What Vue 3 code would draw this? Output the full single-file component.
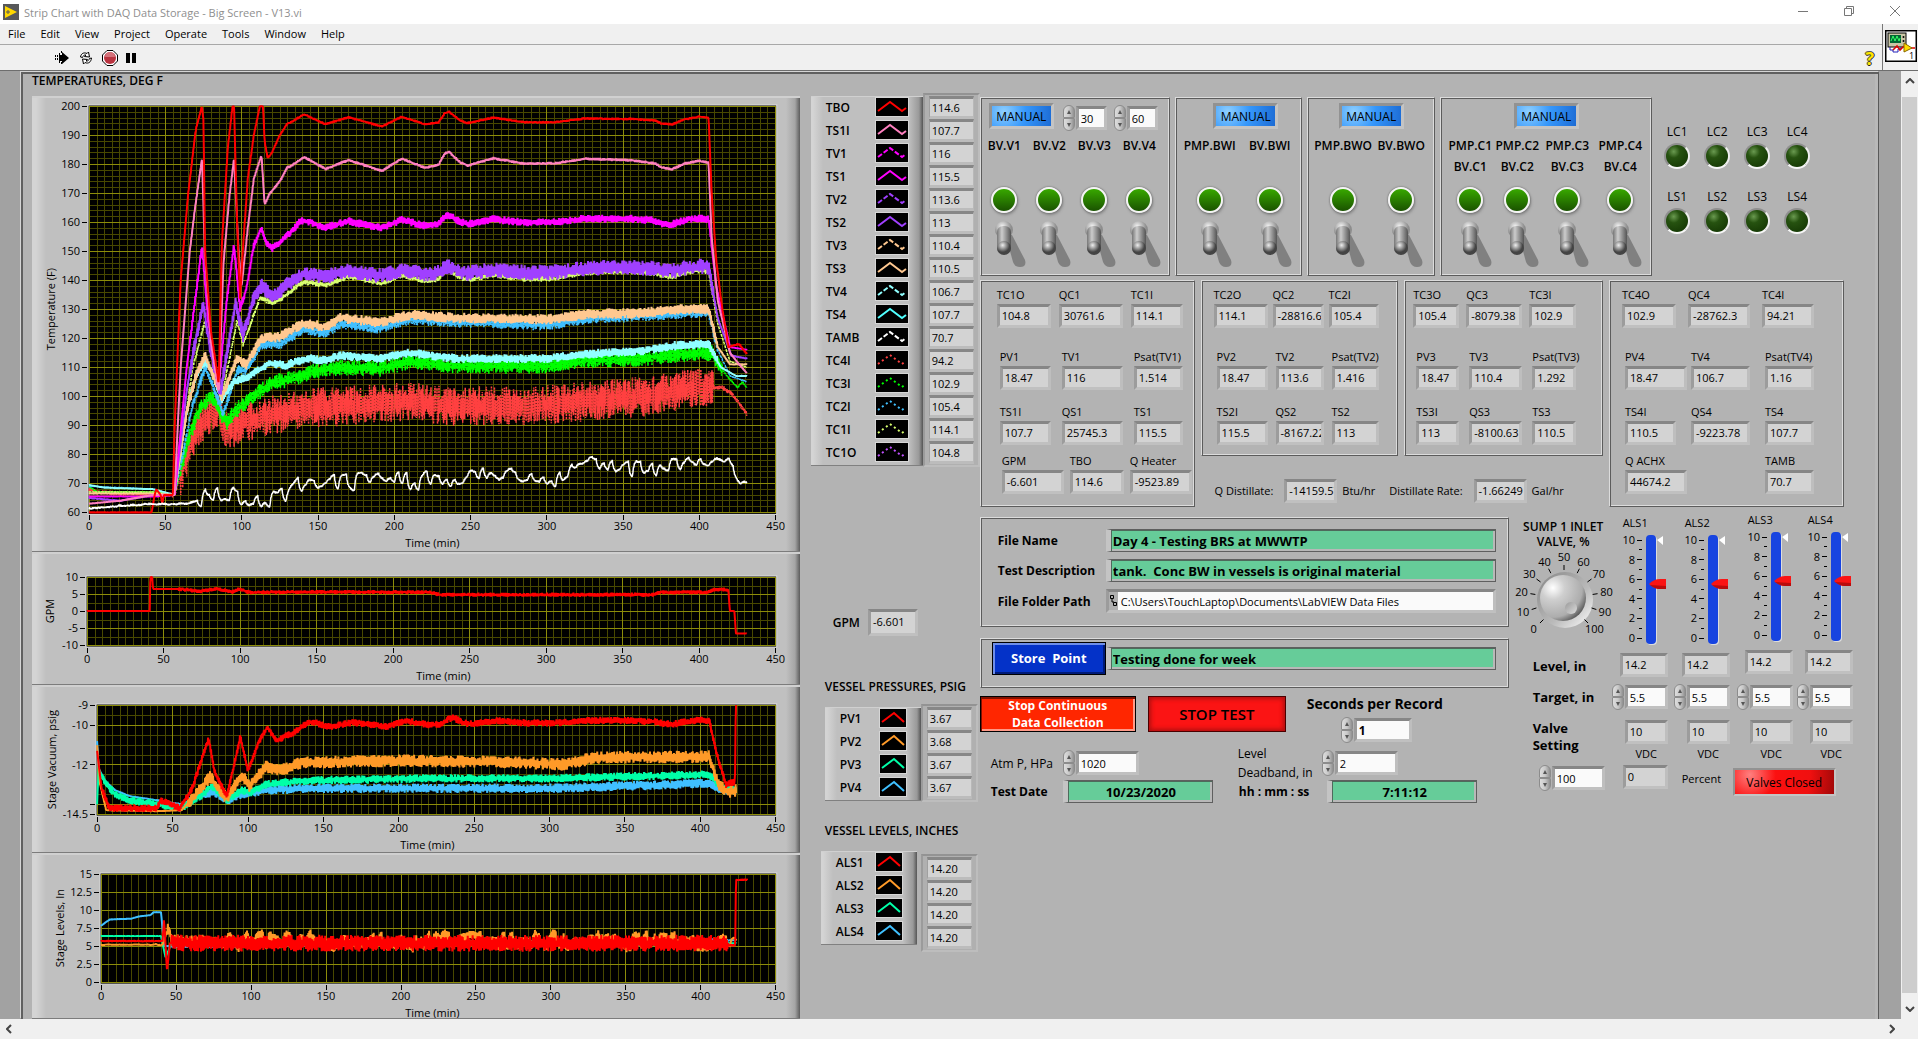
<template>
  <div class="window">
    <header class="titlebar">
      <svg class="app-icon" viewBox="0 0 16 16">
        <rect width="16" height="16" fill="#57585a" />
        <path d="M2 2L14 8L2 14Z" fill="#ffd800" />
        <path d="M3 8h4M5 6v4" stroke="#57585a" stroke-width="1" />
      </svg>
      <span class="caption">Strip Chart with DAQ Data Storage - Big Screen - V13.vi</span>
      <div class="window-buttons">
        <button aria-label="Minimize"><svg viewBox="0 0 12 12"><path d="M1 6.5h10" /></svg></button>
        <button aria-label="Restore"><svg viewBox="0 0 12 12"><path d="M1.5 3.5h7v7h-7zM3.5 3.5v-2h7v7h-2" /></svg></button>
        <button aria-label="Close"><svg viewBox="0 0 12 12"><path d="M1 1L11 11M11 1L1 11" /></svg></button>
      </div>
    </header>

    <div class="bars">
      <nav class="menubar">
        <a v-for="m in menus" :key="m" href="#">{{ m }}</a>
      </nav>
      <div class="toolbar">
        <button aria-label="Run">
          <svg width="16" height="14" viewBox="0 0 16 14">
            <path d="M8 1L15 7L8 13V10H5V4H8Z" fill="#000" />
            <path d="M1.5 4v6M3.5 4v6M5.5 2v2M7.5 0v3M5.5 10v2M7.5 11v3" stroke="#000" stroke-dasharray="2 1" />
          </svg>
        </button>
        <button aria-label="Run continuously">
          <svg width="16" height="14" viewBox="0 0 16 14" fill="#fff" stroke="#000">
            <path d="M2.5 6C3 2.500 6 1 9 2.500L10.500 1L11.500 6L6.500 5.500L8 4C6 3.500 5 5 4.500 6.500Z" />
            <path d="M13.500 7C13 11.500 10 13 7 11.500L5.500 13L4.500 8L9.500 8.500L8 10C10 10.500 11 9 11.500 7.500Z" />
          </svg>
        </button>
        <button aria-label="Abort">
          <svg width="16" height="16" viewBox="0 0 16 16">
            <path d="M5 .5h6L15.500 5v6L11 15.500H5L.5 11V5Z" fill="#fff" stroke="#000" />
            <circle cx="8" cy="8" r="6" fill="#b93440" />
            <path d="M3 7a5 5 0 0 1 10 0Z" fill="#d4717a" />
          </svg>
        </button>
        <button aria-label="Pause">
          <svg width="10" height="12" viewBox="0 0 10 12"><path d="M0 1h4v10h-4zM6 1h4v10h-4z" fill="#000" /></svg>
        </button>
        <button class="help" aria-label="Context help">?</button>
      </div>
      <div class="vi-icon">
        <svg width="32" height="32" viewBox="0 0 32 32">
          <rect x=".75" y=".75" width="30.500" height="30.500" fill="#fff" stroke="#000" stroke-width="1.500" />
          <rect x="3" y="3" width="18" height="14" fill="#c9c6a5" stroke="#000" />
          <rect x="5" y="5" width="11" height="8" fill="#063" />
          <path d="M6 11L8 6L10 11L12 6L14 11L15 8" fill="none" stroke="#3f6" />
          <circle cx="18.500" cy="7" r="1" /><circle cx="18.500" cy="11" r="1" />
          <path d="M5 17v3h3v2h5v-3h3v-2" fill="none" stroke="#22b" />
          <path d="M8 20L12 16L15 20L19 16M26 18h4" fill="none" stroke="#d00" stroke-width="1.500" />
          <path d="M19 13L27 18L19 22Z" fill="#fd0" stroke="#860" />
          <text x="24" y="29" font-size="9">1</text>
        </svg>
      </div>
    </div>

    <main class="workspace">
      <div class="front-panel">
        <h1>TEMPERATURES, DEG F</h1>

        <section class="charts">
          <svg v-for="c in charts" :key="c.title" class="chart" :viewBox="`0 0 767 ${c.height}`">
            <rect :x="c.left - 1" :y="c.top - 1" :width="745 - c.left" :height="c.bottom - c.top + 3" fill="#000" stroke="#ddd" />
            <path :d="c.minor" class="minor" />
            <path :d="c.major" class="major" />
            <path :d="c.ticks" class="tick" />
            <polyline
              v-for="(s, i) in c.lines" :key="i" :points="s.points" fill="none"
              :stroke="s.color" :stroke-width="s.width" :stroke-dasharray="s.dash" stroke-linejoin="bevel"
            />
            <text v-for="y in c.yLabels" :key="y.text" :x="c.left - 9" :y="y.pos + 4" text-anchor="end">{{ y.text }}</text>
            <text v-for="x in c.xLabels" :key="x.text" :x="x.pos" :y="c.bottom + 18" text-anchor="middle">{{ x.text }}</text>
            <text :x="c.caption" :y="c.bottom + 35" text-anchor="middle">Time (min)</text>
            <text :transform="`translate(${c.titleX} ${(c.top + c.bottom) / 2}) rotate(-90)`" text-anchor="middle">{{ c.title }}</text>
          </svg>
        </section>

        <section class="legends">
          <div class="legend-pair">
            <ul class="legend">
              <li v-for="t in temps" :key="t.name">
                <b>{{ t.name }}</b>
                <svg width="32" height="18" viewBox="0 0 32 18">
                  <rect width="32" height="18" />
                  <path d="M2 13L14 4L26 13L30 10" fill="none" :stroke="t.color" stroke-width="2" :stroke-dasharray="t.dash" />
                </svg>
              </li>
            </ul>
            <div class="readings"><output v-for="t in temps" :key="t.name">{{ t.value }}</output></div>
          </div>

          <label class="gpm"><b>GPM</b><output class="box">-6.601</output></label>

          <template v-for="g in vessels" :key="g.title">
            <h2>{{ g.title }}</h2>
            <div class="legend-pair small" :class="g.kind">
              <ul class="legend">
                <li v-for="(n, i) in g.names" :key="n">
                  <b>{{ n }}</b>
                  <svg width="26" height="18" viewBox="0 0 26 18">
                    <rect width="26" height="18" />
                    <path d="M2 13L14 4L24 13" fill="none" :stroke="stageColors[i]" stroke-width="2" />
                  </svg>
                </li>
              </ul>
              <div class="readings"><output v-for="(v, i) in g.values" :key="i">{{ v }}</output></div>
            </div>
          </template>
        </section>

        <section class="controls">
          <div class="valve-row">
            <fieldset v-for="(v, i) in valves" :key="i" class="panel valves" :class="'valves-' + (i + 1)">
              <div class="mode">
                <button class="manual">MANUAL</button>
                <label v-for="n in v.timers" :key="n" class="numeric">
                  <span class="spin"><button aria-label="Increase"></button><button aria-label="Decrease"></button></span>
                  <input :value="n" :aria-label="'Timer ' + n" />
                </label>
              </div>
              <div class="valve-grid">
                <label v-for="n in v.names" :key="n[0]" class="valve">
                  <b>{{ n[0] }}<br />{{ n[1] }}</b>
                  <span class="lamp"></span>
                  <input type="checkbox" />
                  <svg width="34" height="50" viewBox="0 0 34 50"><use href="#toggle" /></svg>
                </label>
              </div>
            </fieldset>
            <div class="leds">
              <div v-for="n in leds" :key="n"><span>{{ n }}</span><i></i></div>
            </div>
          </div>

          <div class="bank-row">
            <div v-for="b in banks" :key="b.id" class="panel bank" :class="'bank-' + b.id">
              <div v-for="(r, i) in b.rows" :key="i" class="bank-line">
                <label v-for="f in r" :key="f[0]" :class="f[2]">{{ f[0] }}<output class="box">{{ f[1] }}</output></label>
              </div>
            </div>
            <div class="distillate">
              <label>Q Distillate: <output class="box">-14159.57</output> Btu/hr</label>
              <label>Distillate Rate: <output class="box">-1.66249</output> Gal/hr</label>
            </div>
          </div>

          <div class="lower">
            <div class="record">
              <div class="panel files">
                <label for="fname">File Name</label>
                <input id="fname" class="green" value="Day 4 - Testing BRS at MWWTP" />
                <label for="fdesc">Test Description</label>
                <input id="fdesc" class="green" value="tank.  Conc BW in vessels is original material" />
                <label for="fpath">File Folder Path</label>
                <div class="path">
                  <svg width="9" height="14" viewBox="0 0 9 14" fill="none" stroke="#000"><path d="M1.500 1.500h3v3h-3zM4.500 8.500h3v3h-3zM3 5v3h2" /></svg>
                  <input id="fpath" value="C:\Users\TouchLaptop\Documents\LabVIEW Data Files" />
                </div>
              </div>
              <div class="panel store">
                <button>Store&nbsp; Point</button>
                <input class="green" value="Testing done for week" aria-label="Point comment" />
              </div>
              <div class="actions">
                <button class="stop-data">Stop Continuous Data Collection</button>
                <button class="stop-test">STOP TEST</button>
                <div class="seconds">
                  <label for="seconds">Seconds per Record</label>
                  <div class="numeric">
                    <span class="spin"><button aria-label="Increase"></button><button aria-label="Decrease"></button></span>
                    <input id="seconds" value="1" />
                  </div>
                </div>
              </div>
              <div class="settings">
                <label for="atm">Atm P, HPa</label>
                <div class="numeric">
                  <span class="spin"><button aria-label="Increase"></button><button aria-label="Decrease"></button></span>
                  <input id="atm" value="1020" />
                </div>
                <label for="deadband">Level<br />Deadband, in</label>
                <div class="numeric">
                  <span class="spin"><button aria-label="Increase"></button><button aria-label="Decrease"></button></span>
                  <input id="deadband" value="2" />
                </div>
              </div>
              <div class="stamps">
                <label for="date">Test Date</label>
                <input id="date" class="green" value="10/23/2020" />
                <label for="time">hh : mm : ss</label>
                <input id="time" class="green" value="7:11:12" />
              </div>
            </div>

            <div class="levels">
              <div class="sump">
                <b>SUMP 1 INLET<br />VALVE, %</b>
                <div class="overlay">
                  <svg width="94" height="96" viewBox="0 0 94 96">
                    <circle cx="48" cy="51" r="28" fill="url(#rim)" />
                    <circle cx="46" cy="49" r="23" fill="url(#ball)" />
                    <circle cx="54" cy="59" r="6" fill="url(#dimple)" />
                    <path :d="knob.ticks" stroke="#000" />
                    <text v-for="k in knob.labels" :key="k.text" :x="k.x" :y="k.y" text-anchor="middle">{{ k.text }}</text>
                  </svg>
                  <input type="range" min="0" max="100" value="100" aria-label="Sump 1 inlet valve, %" />
                </div>
              </div>
              <div v-for="(a, i) in tanks" :key="a.name" class="tank" :class="{ raised: i > 1 }">
                <span>{{ a.name }}</span>
                <div class="overlay">
                  <svg width="48" height="112" viewBox="0 0 48 112">
                    <rect x="27" y="2" width="10" height="109" rx="4" fill="#ddd" />
                    <rect x="26" y="1" width="10" height="109" rx="4" fill="#1744e0" />
                    <path :d="scaleTicks" stroke="#000" shape-rendering="crispEdges" />
                    <text v-for="n in scaleLabels" :key="n.text" x="15" :y="n.y" text-anchor="end">{{ n.text }}</text>
                    <path d="M37 6L43 2V11Z" fill="#fff" />
                    <path d="M29 50Q34 45 40 45H46V55H40Q34 55 29 50Z" fill="#fa1414" />
                    <path d="M30 51Q35 55 40 55H46V52Z" fill="#b80c0c" />
                  </svg>
                  <input type="range" min="0" max="10" step="0.1" value="5.5" :aria-label="a.name + ' target'" />
                </div>
              </div>

              <b class="line">Level, in</b>
              <output v-for="(a, i) in tanks" :key="a.name" class="box level" :class="{ raised: i > 1 }" :aria-label="a.name">14.2</output>

              <b class="line">Target, in</b>
              <label v-for="a in tanks" :key="a.name" class="numeric target">
                <span class="spin"><button aria-label="Increase"></button><button aria-label="Decrease"></button></span>
                <input value="5.5" :aria-label="a.name + ' target, in'" />
              </label>

              <b class="line valve-setting">Valve<br />Setting</b>
              <label v-for="a in tanks" :key="a.name" class="vdc"><output class="box">10</output>VDC</label>

              <label class="numeric percent">
                <span class="spin"><button aria-label="Increase"></button><button aria-label="Decrease"></button></span>
                <input value="100" aria-label="Valve setting" />
              </label>
              <output id="pct" class="box zero">0</output>
              <label for="pct" class="percent-label">Percent</label>
              <button class="closed">Valves Closed</button>
            </div>
          </div>
        </section>
      </div>

      <div class="vscroll">
        <svg width="10" height="6" viewBox="0 0 10 6"><path d="M1 5L5 1L9 5" /></svg>
        <div class="thumb"></div>
        <svg width="10" height="6" viewBox="0 0 10 6"><path d="M1 1L5 5L9 1" /></svg>
      </div>
    </main>

    <div class="hscroll">
      <svg width="6" height="10" viewBox="0 0 6 10"><path d="M5 1L1 5L5 9" /></svg>
      <svg width="6" height="10" viewBox="0 0 6 10"><path d="M1 1L5 5L1 9" /></svg>
    </div>

    <svg class="defs" width="0" height="0">
      <defs>
        <linearGradient id="stem" x1="0" x2="1">
          <stop offset="0" stop-color="#777" /><stop offset=".35" stop-color="#ccc" /><stop offset="1" stop-color="#555" />
        </linearGradient>
        <radialGradient id="nut" cx=".4" cy=".3">
          <stop offset="0" stop-color="#f4f4f4" /><stop offset="1" stop-color="#8d8d8d" />
        </radialGradient>
        <radialGradient id="tip" cx=".4" cy=".3">
          <stop offset="0" stop-color="#eee" /><stop offset="1" stop-color="#444" />
        </radialGradient>
        <linearGradient id="rim" x1="0" y1="0" x2="1" y2="1">
          <stop offset="0" stop-color="#858585" /><stop offset=".6" stop-color="#bbb" /><stop offset="1" stop-color="#fff" />
        </linearGradient>
        <radialGradient id="ball" cx=".28" cy=".28" r=".85">
          <stop offset="0" stop-color="#fff" /><stop offset=".3" stop-color="#cfcfcf" />
          <stop offset=".75" stop-color="#adadad" /><stop offset="1" stop-color="#444" />
        </radialGradient>
        <linearGradient id="dimple" x1="0" y1="0" x2="1" y2="1">
          <stop offset="0" stop-color="#999" /><stop offset="1" stop-color="#ddd" />
        </linearGradient>
        <symbol id="toggle" viewBox="0 0 34 50">
          <path d="M10 13L17 15L30 40Q32 47 25 47Q20 47 18 42Z" fill="#808080" />
          <circle cx="9" cy="10" r="9" fill="url(#nut)" />
          <rect x="2" y="6" width="14" height="28" rx="6" fill="url(#stem)" />
          <ellipse cx="9" cy="28" rx="7" ry="7" fill="url(#tip)" />
        </symbol>
      </defs>
    </svg>
  </div>
</template>

<script setup>
const menus = ['File', 'Edit', 'View', 'Project', 'Operate', 'Tools', 'Window', 'Help']

const DASH = '5 2'
const DOT = '2 3'

const temps = [
  { name: 'TBO', value: '114.6', color: '#ff0000' },
  { name: 'TS1I', value: '107.7', color: '#ff80c0' },
  { name: 'TV1', value: '116', color: '#ff00ff', dash: DASH },
  { name: 'TS1', value: '115.5', color: '#ff00ff' },
  { name: 'TV2', value: '113.6', color: '#a040ff', dash: DASH },
  { name: 'TS2', value: '113', color: '#a040ff' },
  { name: 'TV3', value: '110.4', color: '#ffc890', dash: DASH },
  { name: 'TS3', value: '110.5', color: '#ffc890' },
  { name: 'TV4', value: '106.7', color: '#90ffff', dash: DASH },
  { name: 'TS4', value: '107.7', color: '#50ffff' },
  { name: 'TAMB', value: '70.7', color: '#ffffff', dash: DASH },
  { name: 'TC4I', value: '94.2', color: '#ff4040', dash: DOT },
  { name: 'TC3I', value: '102.9', color: '#00ff00', dash: DOT },
  { name: 'TC2I', value: '105.4', color: '#40c0ff', dash: DOT },
  { name: 'TC1I', value: '114.1', color: '#d8ff70', dash: DOT },
  { name: 'TC1O', value: '104.8', color: '#c050ff', dash: DOT },
]

const stageColors = ['#ff0000', '#ff9a28', '#00ffa8', '#40c0ff']
const vessels = [
  { title: 'VESSEL PRESSURES, PSIG', kind: 'pressure', names: ['PV1', 'PV2', 'PV3', 'PV4'], values: ['3.67', '3.68', '3.67', '3.67'] },
  { title: 'VESSEL LEVELS, INCHES', kind: 'level-pair', names: ['ALS1', 'ALS2', 'ALS3', 'ALS4'], values: ['14.20', '14.20', '14.20', '14.20'] },
]

const valves = [
  { timers: [30, 60], names: [['BV.V1'], ['BV.V2'], ['BV.V3'], ['BV.V4']] },
  { names: [['PMP.BWI'], ['BV.BWI']] },
  { names: [['PMP.BWO'], ['BV.BWO']] },
  { names: [['PMP.C1', 'BV.C1'], ['PMP.C2', 'BV.C2'], ['PMP.C3', 'BV.C3'], ['PMP.C4', 'BV.C4']] },
]
const leds = ['LC1', 'LC2', 'LC3', 'LC4', 'LS1', 'LS2', 'LS3', 'LS4']

const banks = [
  {
    id: 1,
    rows: [
      [['TC1O', '104.8'], ['QC1', '30761.6'], ['TC1I', '114.1']],
      [['PV1', '18.47'], ['TV1', '116'], ['Psat(TV1)', '1.514']],
      [['TS1I', '107.7'], ['QS1', '25745.3'], ['TS1', '115.5']],
      [['GPM', '-6.601'], ['TBO', '114.6'], ['Q Heater', '-9523.89']],
    ],
  },
  {
    id: 2,
    rows: [
      [['TC2O', '114.1'], ['QC2', '-28816.6'], ['TC2I', '105.4']],
      [['PV2', '18.47'], ['TV2', '113.6'], ['Psat(TV2)', '1.416']],
      [['TS2I', '115.5'], ['QS2', '-8167.22'], ['TS2', '113']],
    ],
  },
  {
    id: 3,
    rows: [
      [['TC3O', '105.4'], ['QC3', '-8079.38'], ['TC3I', '102.9']],
      [['PV3', '18.47'], ['TV3', '110.4'], ['Psat(TV3)', '1.292']],
      [['TS3I', '113'], ['QS3', '-8100.63'], ['TS3', '110.5']],
    ],
  },
  {
    id: 4,
    rows: [
      [['TC4O', '102.9'], ['QC4', '-28762.3'], ['TC4I', '94.21']],
      [['PV4', '18.47', 'wide'], ['TV4', '106.7'], ['Psat(TV4)', '1.16']],
      [['TS4I', '110.5'], ['QS4', '-9223.78'], ['TS4', '107.7']],
      [['Q ACHX', '44674.2', 'wide'], ['TAMB', '70.7', 'last']],
    ],
  },
]

const tanks = [{ name: 'ALS1' }, { name: 'ALS2' }, { name: 'ALS3' }, { name: 'ALS4' }]

// Slider scale: one long tick and a number every 2 inches, a short tick between
let scaleTicks = ''
const scaleLabels = []
for (let n = 0; n <= 10; n++) {
  const y = 104 - n * 9.8
  scaleTicks += n % 2 ? `M19 ${y}h3` : `M17 ${y}h5`
  if (n % 2 === 0) scaleLabels.push({ text: n, y: y + 4 })
}

const knob = { ticks: '', labels: [] }
for (let n = 0; n <= 10; n++) {
  const a = ((n * 27 - 225) * Math.PI) / 180
  const cos = Math.cos(a)
  const sin = Math.sin(a)
  knob.ticks += `M${47 + cos * 29} ${50 + sin * 29}L${47 + cos * 34} ${50 + sin * 34}`
  knob.labels.push({ text: n * 10, x: 47 + cos * 43, y: 54 + sin * 42 })
}

function random(seed) {
  let s = seed
  return () => {
    s = (s * 16807) % 2147483647
    return s / 2147483647 - 0.5
  }
}

function interpolate(keys, t) {
  for (let i = 1; i < keys.length; i++) {
    if (t <= keys[i][0]) {
      const [t0, v0] = keys[i - 1]
      const [t1, v1] = keys[i]
      return v0 + ((v1 - v0) * (t - t0)) / (t1 - t0 || 1)
    }
  }
  return keys[keys.length - 1][1]
}

const swing = [[0, 0], [132, 0], [141, 1.6], [155, -1.2], [170, 0.8], [192, -1.8], [205, 1], [220, -1.2], [229, -0.6], [233, 2], [236, 2.4], [243, 0], [248, -0.8], [265, 0.8], [285, -0.5], [305, -0.5], [325, 0.6], [355, 0.4], [371, -0.3], [375, -1.2], [382, -1.6], [390, -0.3], [400, 0.4], [406, 0], [450, 0]]

const charts = [
  {
    title: 'Temperature (F)', titleX: 23, caption: 400, height: 453,
    left: 57, top: 8, bottom: 414, min: 60, max: 200,
    yMajor: range(60, 200, 10), yMinor: range(60, 200, 2), yText: range(60, 200, 10),
    series: [
      { color: '#ff4040', amp: 13, from: 60, to: 409, dash: '2 1', keys: [[0, 68], [5, 67], [42, 66], [56, 66], [62, 76], [70, 88], [78, 93], [85, 96], [90, 88], [100, 91], [120, 93.5], [145, 96], [180, 97], [210, 98], [240, 96.5], [300, 97], [330, 98.5], [365, 100], [385, 102], [408, 103], [415, 103], [421, 101], [431, 94]] },
      { color: '#00ff00', amp: 5.4, from: 60, to: 415, dash: '3 1', keys: [[0, 69], [5, 67], [42, 67], [56, 66], [65, 85], [72, 95], [80, 100], [84, 96], [90, 91], [96, 95], [110, 101], [120, 104.5], [135, 106.5], [150, 109], [165, 110], [190, 109.5], [210, 112], [240, 110.5], [300, 110.5], [325, 112.5], [360, 113], [385, 114.5], [408, 115], [418, 107], [425, 103], [428, 105], [431, 103]] },
      { color: '#40c0ff', amp: 3.6, from: 60, to: 412, dash: '3 1', keys: [[0, 69], [42, 68], [56, 66], [68, 97], [76, 110], [80, 105], [88, 94], [97, 109], [103, 109], [113, 118], [125, 118], [140, 123], [155, 122], [165, 125], [190, 123.5], [210, 126.5], [240, 125.5], [300, 124.5], [330, 127], [360, 127.5], [385, 128.5], [406, 129], [412, 116], [420, 107], [431, 105]] },
      { color: '#90ffff', amp: 3, from: 60, to: 412, width: 2, keys: [[0, 69.5], [10, 68.5], [42, 68], [56, 66], [64, 95], [70, 107], [76, 112], [80, 109], [87, 99], [95, 105], [105, 107], [118, 111.5], [128, 110.5], [142, 113], [155, 112.5], [165, 114], [190, 113], [210, 115], [240, 113], [300, 113], [325, 114.5], [360, 115.5], [385, 117.5], [406, 118], [414, 110], [424, 107], [431, 107]] },
      { color: '#d8ff70', amp: 2, from: 60, to: 409, dash: '3 1', swing: 1, keys: [[0, 67], [42, 67], [56, 66], [68, 110], [76, 126], [80, 116], [87, 100], [97, 126], [101, 118], [112, 134], [121, 132], [135, 137], [150, 139], [170, 140.5], [230, 141], [300, 141], [340, 142.5], [406, 143], [412, 125], [420, 112], [431, 110]] },
      { color: '#ffc890', amp: 3.4, from: 60, to: 412, width: 2, keys: [[0, 66.5], [42, 66.5], [56, 66], [64, 95], [70, 107], [76, 114], [80, 109], [87, 100], [97, 113], [103, 111], [113, 120], [125, 120.5], [140, 125], [155, 124], [165, 127], [190, 125.5], [210, 128], [240, 127], [300, 126.5], [330, 128.5], [360, 128.5], [385, 130], [406, 130], [412, 117], [420, 111], [431, 111]] },
      { color: '#a040ff', amp: 5, from: 66, to: 409, width: 2, swing: 0.7, keys: [[0, 65], [20, 64], [42, 66], [56, 66], [64, 102], [70, 120], [75, 132], [79, 117], [86, 101], [92, 120], [96, 132], [101, 121], [108, 134], [113, 138], [121, 134.5], [131, 139], [142, 141.5], [165, 142.5], [230, 143], [300, 143], [340, 144], [406, 144.5], [412, 127], [421, 114], [431, 113]] },
      { color: '#ff00ff', amp: 2.6, from: 66, to: 408, width: 2, swing: 1, keys: [[0, 65.5], [42, 65.5], [56, 66], [64, 110], [70, 135], [74, 152], [78, 126], [85, 103], [90, 132], [95, 152], [99, 130], [103, 137], [108, 152], [113, 158], [116, 153], [120, 151], [128, 154.5], [138, 159], [165, 159.5], [230, 160], [300, 160.5], [406, 161], [411, 138], [420, 117], [431, 116]] },
      { color: '#ff80c0', amp: 0.9, from: 66, to: 408, width: 2, swing: 1.5, keys: [[0, 63], [20, 64], [42, 66], [56, 66], [60, 110], [66, 150], [70, 167], [74, 182], [76, 148], [80, 118], [85, 101], [88, 145], [92, 169], [95, 182], [98, 150], [100, 138], [104, 158], [108, 175], [113, 183], [115, 166], [118, 169.5], [125, 174], [130, 179], [140, 180], [300, 181], [406, 180.5], [408, 155], [412, 133], [420, 115], [426, 111], [431, 108]] },
      { color: '#ff0000', amp: 0.8, from: 58, to: 431, width: 2, swing: 1.2, keys: [[0, 60], [41, 60], [43, 66], [44, 68], [47, 66], [48, 63], [49, 66], [55, 66], [56, 88], [60, 140], [65, 170], [70, 192], [74, 200], [75, 195], [76, 150], [80, 122], [84, 108], [85, 104], [87, 152], [91, 186], [94, 200], [95, 200], [97, 160], [99, 134], [101, 152], [104, 175], [108, 190], [112, 200], [114, 200], [115, 188], [117, 182], [120, 184], [125, 190], [130, 194], [140, 195.2], [300, 195], [350, 195], [406, 196], [408, 170], [411, 147], [415, 130], [419, 117], [426, 118], [431, 114.6]] },
      { color: '#ffffff', amp: 0.8, from: 0, to: 431, width: 1.5, drift: 5, keys: [[0, 61.5], [40, 62.8], [64, 63], [80, 66], [110, 65], [130, 65], [137, 70], [160, 70], [175, 71], [215, 71], [240, 71], [250, 74], [290, 73], [310, 72], [325, 76], [350, 75], [406, 76], [420, 75], [425, 72], [431, 70.7]] },
    ],
  },
  {
    title: 'GPM', titleX: 22, caption: 411, height: 129,
    left: 55, top: 23, bottom: 91, min: -10, max: 10,
    yMajor: range(-10, 10, 5), yMinor: range(-10, 10, 2.5), yText: range(-10, 10, 5),
    series: [
      { color: '#ff0000', amp: 1.1, from: 60, to: 418, width: 2, keys: [[0, 0], [41, 0], [41.3, 10], [42.7, 10], [43, 6.5], [60, 6.5], [74, 5.8], [85, 6.6], [95, 5.6], [99, 6.5], [106, 5.5], [150, 5.6], [225, 5.5], [230, 4.8], [370, 4.8], [373, 5.5], [405, 5.5], [410, 6.3], [419, 6.3], [420, 0], [423, 0], [424, -6.6], [431, -6.6]] },
    ],
  },
  {
    title: 'Stage Vacuum, psig', titleX: 24, caption: 395, height: 165,
    left: 65, top: 18, bottom: 127, min: -14.5, max: -9,
    yMajor: [-14.5, -14, -12, -10, -9], yMinor: range(-14.5, -9, 0.5), yText: [-14.5, -12, -10, -9],
    series: [
      { color: '#40c0ff', amp: 0.45, from: 60, to: 424, width: 2, keys: [[0, -10.8], [1, -12.2], [5, -12.8], [12, -13.3], [22, -13.6], [40, -13.8], [56, -14], [70, -13.5], [78, -13.4], [86, -13.8], [95, -13.5], [110, -13.3], [140, -13.2], [300, -13.2], [406, -12.95], [414, -13.3], [424, -13.3]] },
      { color: '#00ffa8', amp: 0.4, from: 3, to: 424, width: 2, keys: [[0, -14], [1, -12.2], [5, -12.9], [12, -13.5], [22, -13.8], [40, -14], [56, -14.2], [70, -13.5], [76, -13.1], [86, -13.8], [96, -13.3], [102, -13.4], [112, -13], [140, -12.8], [220, -12.7], [300, -12.7], [406, -12.5], [414, -13.2], [424, -13.3]] },
      { color: '#ff9a28', amp: 0.6, from: 60, to: 424, width: 2, keys: [[0, -11], [2, -13], [6, -14.3], [40, -14.35], [56, -14.3], [66, -13.5], [75, -12.6], [80, -13.2], [86, -13.7], [96, -12.5], [101, -13.1], [112, -12.1], [122, -12.3], [135, -11.9], [200, -11.8], [280, -11.9], [310, -12], [330, -11.65], [406, -11.6], [412, -13], [418, -13.4], [424, -13.3]] },
      { color: '#ff0000', amp: 0.35, from: 3, to: 423, width: 2, swing: 0.1, keys: [[0, -11.3], [3, -13.2], [8, -14.2], [40, -14.2], [42, -13.8], [55, -14.2], [63, -13.2], [70, -11.6], [74, -10.7], [78, -12.4], [86, -13.6], [91, -12], [95, -10.6], [100, -12.3], [107, -10.9], [113, -10.1], [119, -10.8], [130, -10.4], [140, -10], [200, -9.9], [300, -9.85], [406, -9.8], [411, -11.5], [417, -13], [422, -12.9], [423, -12.9], [423.5, -9], [424, -9]] },
    ],
  },
  {
    title: 'Stage Levels, In', titleX: 32, caption: 400, height: 163,
    left: 69, top: 19, bottom: 127, min: 0, max: 15,
    yMajor: range(0, 15, 2.5), yMinor: [], yText: range(0, 15, 2.5),
    series: [
      { color: '#40c0ff', amp: 0.6, from: 47, to: 418, width: 2, keys: [[0, 7.8], [3, 8.3], [6, 8.7], [20, 8.8], [25, 9.1], [33, 9.3], [35, 9.7], [40, 9.7], [42, 5], [420, 5.8], [424, 5.8]] },
      { color: '#00ffa8', amp: 0.8, from: 47, to: 418, width: 2, keys: [[0, 6.4], [40, 6.4], [43, 3.4], [47, 5.4], [424, 5.4]] },
      { color: '#ff9a28', amp: 1.4, from: 44, to: 418, width: 2, drift: 1.4, keys: [[0, 5.2], [41, 5.2], [45, 7.6], [47, 5.8], [418, 5.8], [424, 5.8]] },
      { color: '#ff0000', amp: 2.2, from: 47, to: 418, width: 2, keys: [[0, 5.7], [41, 5.7], [42, 8.8], [44, 1.5], [46, 5.5], [60, 5.4], [418, 5.4], [419, 5.1], [423, 5.1], [423.5, 14.2], [431, 14.2]] },
    ],
  },
].map(buildChart)

function range(from, to, step) {
  const out = []
  for (let v = from; v <= to + 0.001; v += step) out.push(v)
  return out
}

function buildChart(c) {
  const right = 743
  const px = t => c.left + ((right - c.left) * t) / 450
  const py = v => Math.max(c.top, Math.min(c.bottom, c.bottom - ((c.bottom - c.top) * (v - c.min)) / (c.max - c.min)))
  const vline = t => `M${Math.round(px(t))} ${c.top}V${c.bottom}`
  const hline = v => `M${c.left} ${Math.round(py(v))}H${right}`
  const lines = c.series.map((s, n) => {
    const rnd = random(4711 + n * 977)
    const end = s.keys[s.keys.length - 1][0]
    const points = []
    let slow = 0
    let target = 0
    for (let t = 0, i = 0; t <= end; t += 0.33, i++) {
      if (i % 8 === 0) target = rnd() * (s.drift || 0) * (t > 68 ? 1.4 : 0.1)
      slow += (target - slow) * 0.3
      const quiet = t < s.from || t > s.to
      // the controllers hunt, so samples jump from one side of the mean to the other
      const side = i % 2 ? 1 : -1
      const noise = side * (0.33 + rnd() * 0.4) * s.amp * (quiet ? 0.12 : 1)
      const v = interpolate(s.keys, t) + noise + slow + interpolate(swing, t) * (s.swing || 0)
      points.push(px(t).toFixed(1) + ',' + py(v).toFixed(1))
    }
    return { points: points.join(' '), color: s.color, width: s.width || 1.5, dash: s.dash }
  })
  return {
    ...c,
    lines,
    minor: range(0, 450, 5).map(vline).join('') + c.yMinor.map(hline).join(''),
    major: range(0, 450, 50).map(vline).join('') + c.yMajor.map(hline).join(''),
    ticks: range(0, 450, 50).map(t => `M${Math.round(px(t))} ${c.bottom + 3}v5`).join('')
      + c.yMajor.map(v => `M${c.left - 7} ${Math.round(py(v))}h5`).join(''),
    xLabels: range(0, 450, 50).map(t => ({ text: String(t), pos: px(t) })),
    yLabels: c.yText.map(v => ({ text: String(v), pos: py(v) })),
  }
}
</script>

<style>
body {
  margin: 0;
  background: #f0f0f0;
}
</style>

<style scoped>
* {
  box-sizing: border-box;
}
.window {
  height: 100vh;
  display: flex;
  flex-direction: column;
  font: 11px/15px "Open Sans", "Noto Sans", sans-serif;
  color: #000;
  overflow: hidden;
}
button, input {
  font: inherit;
  color: inherit;
  padding: 0;
  margin: 0;
  border: 0;
  border-radius: 0;
  min-width: 0;
}
button {
  background: none;
}
ul {
  margin: 0;
  padding: 0;
  list-style: none;
}
.defs {
  position: absolute;
}

/* window chrome */
.titlebar {
  flex: none;
  height: 24px;
  display: flex;
  align-items: center;
  gap: 5px;
  padding-left: 3px;
  background: #fff;
  color: #8f8f8f;
}
.app-icon {
  width: 16px;
  height: 16px;
}
.window-buttons {
  margin-left: auto;
  display: flex;
}
.window-buttons button {
  width: 46px;
  height: 24px;
}
.window-buttons svg {
  width: 12px;
  height: 12px;
  fill: none;
  stroke: #777;
}
.bars {
  flex: none;
  display: grid;
  grid-template-columns: 1fr 36px;
  grid-template-rows: 21px 25px;
  background: #f0f0f0;
  border-bottom: 1px solid #6e6e6e;
}
.menubar {
  display: flex;
  gap: 15px;
  padding: 0 0 1px 8px;
  align-items: center;
  border-bottom: 1px solid #a8a8a8;
}
.menubar a {
  color: #000;
  text-decoration: none;
}
.toolbar {
  display: flex;
  align-items: center;
  gap: 8px;
  padding-left: 54px;
}
.toolbar button {
  display: flex;
}
.toolbar .help {
  margin: 0 8px 0 auto;
  font: bold 18px/18px "Open Sans", sans-serif;
  color: #ffe600;
  text-shadow: 1px 0 #222, -1px 0 #555, 0 1px #222, 0 -1px #555;
}
.vi-icon {
  grid-area: 1 / 2 / 3 / 3;
  display: flex;
  padding: 6px 0 0 2px;
  border-left: 1px solid #777;
}
.workspace {
  flex: 1;
  min-height: 0;
  display: flex;
  background: #a2a2a2;
  padding-left: 21px;
  overflow: hidden;
}
.vscroll {
  flex: none;
  width: 17px;
  margin-left: 22px;
  background: #f0f0f0;
  display: flex;
  flex-direction: column;
  align-items: center;
  padding: 7px 0;
}
.vscroll .thumb {
  flex: 1;
  width: 15px;
  margin: 13px 0;
  background: #cdcdcd;
}
.vscroll svg, .hscroll svg {
  fill: none;
  stroke: #444;
  stroke-width: 2;
}
.hscroll {
  flex: none;
  height: 20px;
  display: flex;
  justify-content: space-between;
  align-items: center;
  padding: 0 23px 0 6px;
  background: #f0f0f0;
}

/* front panel */
.front-panel {
  flex: 1;
  min-width: 0;
  display: grid;
  grid-template-columns: 765fr 175fr 895fr;
  grid-template-rows: 19px auto;
  padding-left: 9px;
  margin-top: 1px;
  background: #b3b3b3;
  border: 2px solid #606060;
  border-right: 1px solid #5a5a5a;
  border-bottom: 0;
  box-shadow: inset -3px 0 #b9b9b9, -1px -1px #d5d5d5;
}
h1, h2 {
  margin: 0;
  font-size: 12px;
  line-height: 16px;
  font-weight: 600;
}
h1 {
  grid-column: 1 / -1;
  line-height: 14px;
}
b {
  font-weight: 600;
}
.charts {
  display: flex;
  flex-direction: column;
  padding-top: 3px;
}
.chart {
  display: block;
  width: 100%;
  height: auto;
  box-sizing: content-box;
  border-top: 2px solid #d0d0d0;
  border-bottom: 1px solid #7c7c7c;
  background: linear-gradient(90deg, #d4d4d4 4px, #c0c0c0 14px, #c0c0c0 calc(100% - 14px), #a5a5a5 calc(100% - 5px), #5c5c5c);
}
.chart path {
  fill: none;
  shape-rendering: crispEdges;
}
.minor {
  stroke: #484800;
}
.major {
  stroke: #8c8c0a;
}
.tick {
  stroke: #000;
}

/* legends */
.legends {
  padding-left: 11px;
}
.legend-pair {
  display: flex;
  align-items: flex-start;
}
.legend {
  flex: none;
  width: 112px;
  margin-top: 3px;
  padding: 0 15px;
  border-top: 1px solid #d0d0d0;
  border-bottom: 1px solid #808080;
  background: linear-gradient(90deg, #d4d4d4 2px, #bfbfbf 12px, #bfbfbf calc(100% - 14px), #999 calc(100% - 4px), #555);
}
.legend li {
  height: 23px;
  padding-bottom: 3px;
  display: flex;
  align-items: center;
  justify-content: space-between;
  font-size: 12px;
}
.legend svg {
  outline: 1px solid #d6d6d6;
}
.readings {
  width: 57px;
  flex: none;
  padding: 1px 4px;
  border: 2px solid;
  border-color: #939393 #bdbdbd #bdbdbd #9b9b9b;
  background: #b0b0b0;
}
.readings output {
  display: block;
  height: 23px;
  padding-left: 2px;
  line-height: 18px;
  background: #d3d3d3;
  border: solid;
  border-width: 3px 1px;
  border-color: #878787 #b8b8b8 #bcbcbc #a0a0a0;
}
.small .legend {
  width: 96px;
  margin-left: 14px;
}
.level-pair {
  padding-right: 2px;
}
.level-pair .legend {
  margin-left: 10px;
}
.level-pair .readings {
  margin: 6px 0 0 4px;
}
.gpm {
  display: flex;
  align-items: center;
  gap: 8px;
  margin: 142px 0 43px 22px;
  font-size: 12px;
}
.gpm .box {
  width: 50px;
  height: 27px;
  line-height: 20px;
}
h2 {
  margin: 21px 0 9px 14px;
}
.gpm + h2 {
  margin-top: 0;
}

/* shared controls */
.box {
  display: block;
  height: 24px;
  padding-left: 2px;
  font-size: 11px;
  line-height: 18px;
  border: 3px solid;
  border-color: #868686 #bebebe #c0c0c0 #9c9c9c;
  background: #d3d3d3;
  white-space: nowrap;
  overflow: hidden;
}
.panel {
  margin: 0;
  min-width: 0;
  padding: 0;
  border: 1px solid;
  border-color: #dcdcdc #5c5c5c #5c5c5c #dcdcdc;
  box-shadow: inset 1px 1px #5c5c5c, inset -1px -1px #dcdcdc;
}
.numeric {
  display: flex;
  align-items: center;
}
.numeric input {
  width: 31px;
  height: 24px;
  padding-left: 2px;
  background: #fafafa;
  border: 3px solid;
  border-color: #868686 #bebebe #c0c0c0 #9c9c9c;
}
.spin {
  flex: none;
  width: 12px;
  height: 26px;
  margin-right: 1px;
  display: flex;
  flex-direction: column;
}
.spin button {
  flex: 1;
  display: flex;
  align-items: center;
  justify-content: center;
  border: 1px solid #8c8c8c;
  border-radius: 6px 6px 1px 1px;
  background: linear-gradient(90deg, #ddd, #c9c9c9 50%, #909090);
}
.spin button + button {
  border-radius: 1px 1px 6px 6px;
}
.spin button::before {
  content: "";
  border: 2px solid transparent;
  border-top: 0;
  border-bottom: 4px solid #555;
}
.spin button + button::before {
  border-top: 4px solid #555;
  border-bottom: 0;
}
.overlay {
  position: relative;
}
.overlay svg {
  display: block;
  overflow: visible;
}
.overlay input {
  position: absolute;
  inset: 0;
  width: 100%;
  height: 100%;
  opacity: 0;
}

/* valve switches */
.controls {
  display: flex;
  flex-direction: column;
  padding-top: 4px;
}
.valve-row {
  display: grid;
  grid-template-columns: 190fr 126fr 128fr 211fr 220fr;
  column-gap: 5px;
}
.valves {
  height: 179px;
  padding-top: 5px;
}
.mode {
  display: flex;
  justify-content: center;
  height: 30px;
}
.valves-1 .mode {
  justify-content: flex-start;
  padding-left: 8px;
  gap: 7px;
}
.valves-2 .mode {
  padding-left: 14px;
}
.manual {
  width: 65px;
  height: 26px;
  font-size: 12px;
  border: 3px solid;
  border-color: #929292 #c4c4c4 #c4c4c4 #929292;
  background: radial-gradient(circle at 20% 30%, #8fd0ff, #3597fb 45%, #1c6bd4);
}
.manual + .numeric {
  margin-left: 2px;
}
.valve-grid {
  display: grid;
  justify-content: center;
}
.valves-1 .valve-grid {
  grid-template-columns: repeat(4, 45px);
  justify-content: start;
  padding-left: 1px;
}
.valves-2 .valve-grid {
  grid-template-columns: 62px 58px;
}
.valves-3 .valve-grid {
  grid-template-columns: 60px 56px;
}
.valves-4 .valve-grid {
  grid-template-columns: 48px 46px 54px 52px;
}
.valve {
  display: flex;
  flex-direction: column;
  align-items: center;
}
.valve b {
  height: 46px;
  padding-top: 2px;
  font-size: 12px;
  line-height: 21px;
  white-space: nowrap;
  text-align: center;
}
.lamp {
  width: 26px;
  height: 26px;
  margin-top: 8px;
  border: 2px solid #f4f4f4;
  border-radius: 50%;
  background: linear-gradient(#38a800, #1a5200);
  box-shadow: 0 0 2px #555, 1px 2px 3px #888;
}
.valve input {
  width: 1px;
  height: 1px;
  opacity: 0;
}
.valve svg {
  margin: 6px 0 0 16px;
}
.leds {
  display: grid;
  grid-template-columns: repeat(4, 40px);
  grid-auto-rows: 65px;
  padding: 27px 0 0 0;
}
.leds div {
  display: flex;
  flex-direction: column;
  align-items: center;
}
.leds span {
  font-size: 12px;
}
.leds i {
  width: 26px;
  height: 26px;
  margin-top: 4px;
  border: 2px solid;
  border-color: #8f8f8f #eee #f6f6f6 #8f8f8f;
  border-radius: 50%;
  background: radial-gradient(circle at 35% 30%, #6a9a50, #265210 30%, #163a05 80%);
}

/* readout banks */
.bank-row {
  display: grid;
  grid-template-columns: 214fr 197fr 198fr 234fr 28fr;
  grid-template-rows: 176px 51px;
  column-gap: 6px;
  margin-top: 4px;
}
.bank {
  padding-top: 6px;
}
.bank-1, .bank-4 {
  grid-row: 1 / 3;
}
.bank-4 {
  grid-column: 4;
}
.bank-line {
  display: grid;
}
.bank-line label {
  white-space: nowrap;
}
.bank-line .box {
  margin-top: 2px;
}
.bank-line + .bank-line {
  margin-top: 21px;
}
.bank-line:nth-child(3) {
  margin-top: 14px;
}
.bank-line:nth-child(4) {
  margin-top: 8px;
}
.bank-line + .bank-line label {
  padding-left: 3px;
}
.bank-1 .bank-line {
  grid-template-columns: 54px 64px 52px;
  column-gap: 8px;
  padding-left: 16px;
}
.bank-1 .bank-line:nth-child(4) {
  grid-template-columns: 65px 57px 65px;
  column-gap: 3px;
  padding-left: 18px;
}
.bank-2 .bank-line {
  grid-template-columns: 54px 51px 50px;
  column-gap: 5px;
  padding-left: 12px;
}
.bank-3 .bank-line {
  grid-template-columns: 46px 56px 47px;
  column-gap: 7px;
  padding-left: 8px;
}
.bank-4 .bank-line {
  grid-template-columns: 54px 62px 52px;
  column-gap: 12px;
  padding-left: 12px;
}
.wide .box {
  width: 62px;
}
.last {
  grid-column: 3;
}
.distillate {
  grid-area: 2 / 2 / 3 / 4;
  display: flex;
  align-items: center;
  gap: 14px;
  padding: 18px 0 0 14px;
}
.distillate label {
  display: flex;
  align-items: center;
  gap: 5px;
  white-space: nowrap;
}
.distillate .box {
  width: 53px;
  margin-left: 6px;
}

/* record settings */
.lower {
  display: grid;
  grid-template-columns: 527fr 360fr;
  column-gap: 8px;
  margin-top: 10px;
}
.files {
  display: grid;
  grid-template-columns: 101px 1fr;
  column-gap: 7px;
  row-gap: 7px;
  align-items: center;
  align-content: start;
  height: 110px;
  padding: 11px 12px 0 17px;
}
.files label {
  font-size: 12px;
  font-weight: 700;
}
.green {
  width: 100%;
  height: 23px;
  font-size: 13px;
  font-weight: 700;
  background: #66cc99;
  border: 1px solid #5f5f5f;
  border-left: 5px solid #c4c4c4;
  box-shadow: inset 1px 1px #4e6a5c, inset -2px -2px #b8b8b8;
  padding-left: 2px;
}
.path {
  display: flex;
  align-items: center;
  height: 24px;
  border: 3px solid;
  border-color: #868686 #bebebe #c0c0c0 #9c9c9c;
  background: #b0b0b0;
}
.path input {
  flex: 1;
  height: 18px;
  padding-left: 3px;
  background: #fafafa;
}
.store {
  display: flex;
  height: 50px;
  margin-top: 11px;
  padding: 3px 12px 0 11px;
}
.store button {
  flex: none;
  width: 114px;
  height: 33px;
  font-size: 13px;
  font-weight: 700;
  color: #fff;
  background: #0432c8;
  border: 1px solid #000;
  box-shadow: inset 2px 2px #6f8fe8, inset -2px -2px #001a78;
}
.store .green {
  margin-top: 5px;
}
.actions {
  display: flex;
  gap: 12px;
  height: 48px;
  margin-top: 8px;
}
.actions > button {
  flex: none;
  height: 36px;
}
.stop-data {
  width: 156px;
  padding: 0 20px;
  font-size: 12px;
  line-height: 17px;
  font-weight: 700;
  color: #fff;
  background: #ff2600;
  border: 1px solid #000;
  box-shadow: inset 1px 2px #801000, inset -2px -2px #ff9a88;
}
.stop-test {
  width: 138px;
  font-size: 15px;
  font-weight: 600;
  background: #fb1414;
  border: 1px solid #4a0000;
  box-shadow: inset 0 0 4px 2px #b01010;
}
.seconds {
  margin-left: 9px;
}
.seconds label {
  display: block;
  font-size: 14px;
  font-weight: 700;
  white-space: nowrap;
}
.seconds .numeric {
  margin: 6px 0 0 34px;
}
.seconds input {
  width: 58px;
  font-size: 12px;
  font-weight: 700;
}
.settings, .stamps {
  display: grid;
  grid-template-columns: 72px 166px 88px 1fr;
  align-items: center;
  padding-left: 11px;
}
.settings {
  height: 36px;
  padding-bottom: 5px;
}
.settings label {
  font-size: 12px;
  line-height: 19px;
  white-space: nowrap;
}
.settings label:nth-of-type(2) {
  padding-left: 9px;
}
.settings .numeric {
  justify-self: start;
}
.settings .numeric input {
  width: 63px;
}
.settings > .numeric:last-child {
  margin-left: 5px;
}
.stamps label {
  font-size: 12px;
  font-weight: 700;
}
.stamps label:nth-of-type(2) {
  padding-left: 10px;
}
.stamps .green {
  width: 150px;
  text-align: center;
}
.stamps .green:last-child {
  margin-left: 10px;
}

/* tank levels */
.levels {
  display: grid;
  grid-template-columns: 93px 58px 62px 63px 60px;
  grid-template-rows: 136px 31px 36px 45px 34px;
  align-items: start;
}
.sump {
  text-align: center;
  font-size: 12px;
  white-space: nowrap;
  padding-top: 2px;
}
.sump text, .tank text {
  font-size: 11px;
}
.tank {
  justify-self: end;
  width: 48px;
}
.tank span {
  display: block;
  margin-bottom: 6px;
  padding-left: 3px;
  line-height: 11px;
}
.raised {
  margin-top: -3px;
}
.level {
  width: 48px;
  justify-self: end;
}
.line {
  padding: 5px 0 0 16px;
  font-size: 13px;
  line-height: 17px;
  font-weight: 700;
}
.valve-setting {
  padding-top: 0;
}
.target {
  width: 56px;
  justify-self: end;
}
.target input {
  flex: 1;
}
.vdc {
  justify-self: end;
  width: 43px;
  text-align: center;
}
.vdc .box {
  margin-bottom: 2px;
  text-align: left;
}
.percent {
  padding-left: 22px;
}
.percent input {
  width: 53px;
}
.zero {
  width: 45px;
  justify-self: end;
}
.percent-label {
  padding: 6px 0 0 14px;
}
.closed {
  grid-column: 4 / 6;
  width: 103px;
  height: 28px;
  margin: 3px 0 0 3px;
  font-size: 12px;
  border: 2px solid;
  border-color: #929292 #c4c4c4 #c4c4c4 #929292;
  background: radial-gradient(circle at 15% 20%, #ff8080, #fb1010 30%, #f01010 70%, #a00808);
}
</style>
